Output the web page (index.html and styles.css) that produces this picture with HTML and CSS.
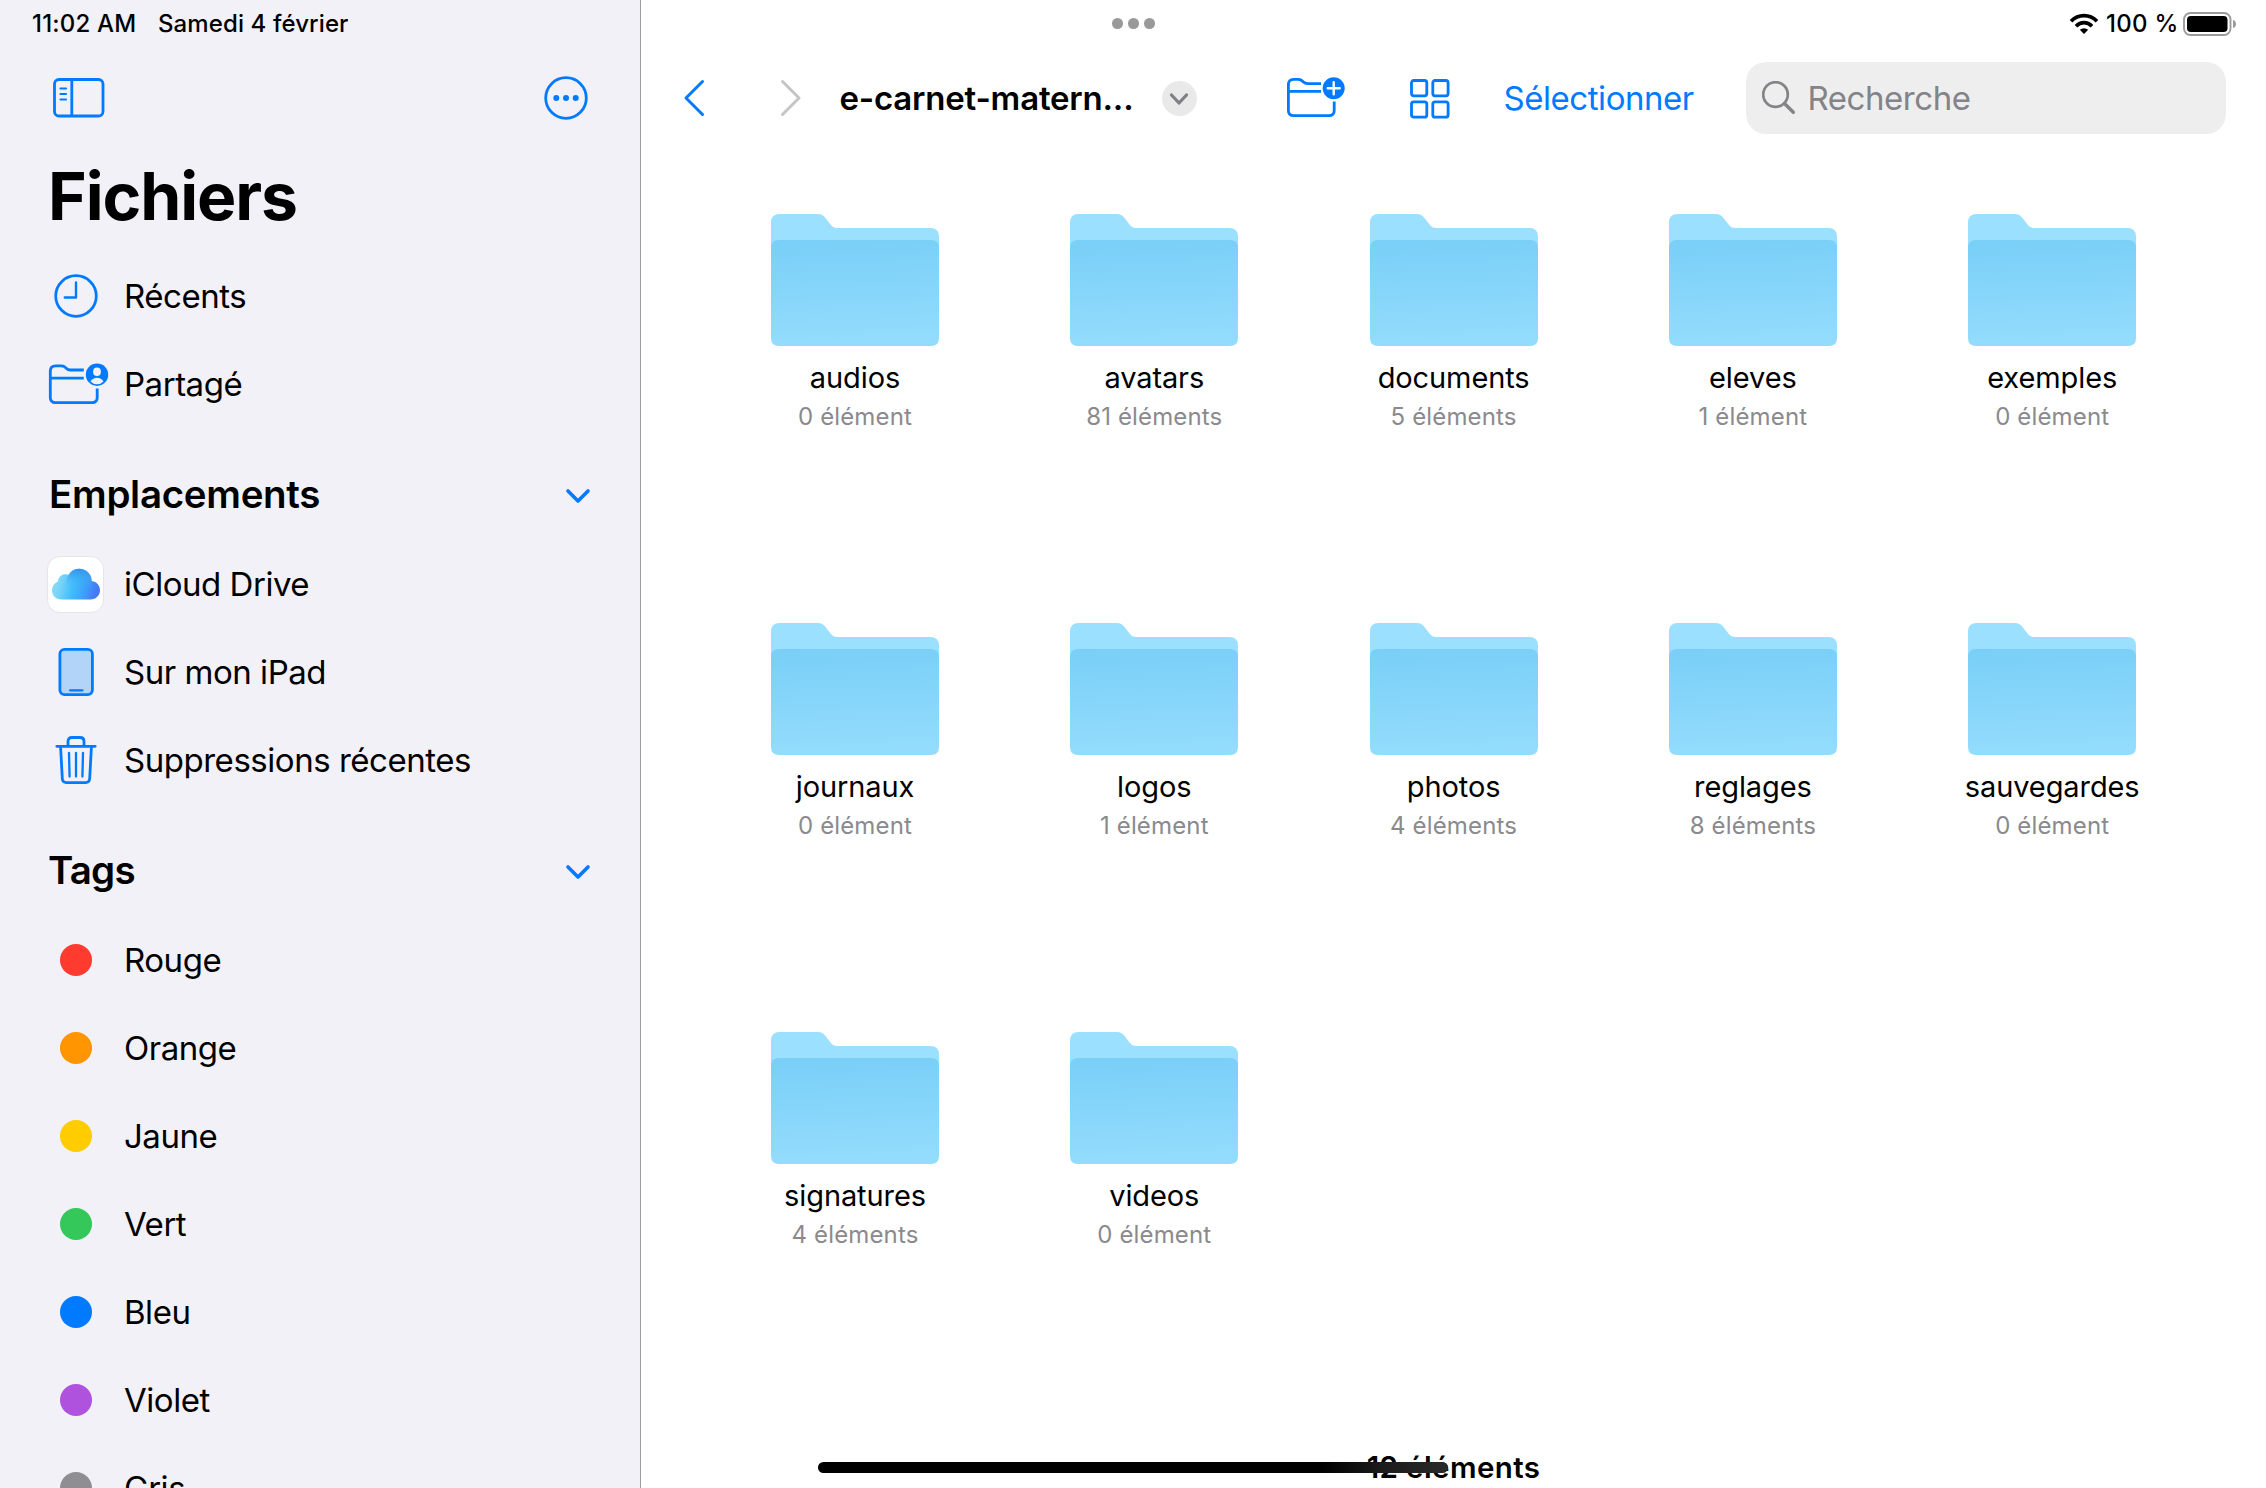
FILE: index.html
```html
<!DOCTYPE html>
<html lang="fr">
<head>
<meta charset="utf-8">
<title>Fichiers</title>
<link rel="stylesheet" href="styles.css">
</head>
<body>
<svg class="defs" width="0" height="0">
  <defs>
    <linearGradient id="front" x1="0" y1="0" x2="0.06" y2="1"><stop offset="0" stop-color="#79cff7"/><stop offset="1" stop-color="#93dcfd"/></linearGradient>
    <linearGradient id="cloud" x1="0" y1="0" x2="1" y2="0.15"><stop offset="0" stop-color="#8edff8"/><stop offset="0.25" stop-color="#79d3f8"/><stop offset="0.52" stop-color="#3fbdfc"/><stop offset="0.75" stop-color="#3da3f8"/><stop offset="1" stop-color="#4579f8"/></linearGradient>
    <linearGradient id="cloudtop" x1="0" y1="0" x2="0" y2="1"><stop offset="0" stop-color="#3591ea"/><stop offset="1" stop-color="#3eb9fa" stop-opacity="0"/></linearGradient>
    <symbol id="folder" viewBox="0 0 168 132">
      <path fill="#9be1ff" d="M0 40V8.500Q0 0 8.500 0H47Q51.500 0 54.500 4L59.500 10.500Q62 14 66.500 14H159.500Q168 14 168 22.500V40Z"/>
      <path fill="url(#front)" d="M0 34Q0 26 8 26H160Q168 26 168 34V124Q168 132 160 132H8Q0 132 0 124Z"/>
    </symbol>
  </defs>
</svg>
<div class="screen">
  <aside class="sidebar">
    <div class="status status-left"><span class="time">11:02 AM</span><span class="date">Samedi 4 février</span></div>
    <div class="side-tools">
      <svg width="52" height="42" viewBox="0 0 52 42" class="line"><rect x="1.500" y="2.500" width="48.500" height="36.500" rx="4.500"/><path d="M18.800 2.500V39"/><path d="M7.500 11.500H13M7.500 17H13M7.500 22.500H13" stroke-width="2.200" stroke-linecap="round"/></svg>
      <svg width="44" height="44" viewBox="0 0 44 44" class="line"><circle cx="22" cy="22" r="20.300"/><g class="solid"><circle cx="12.300" cy="22" r="3"/><circle cx="22" cy="22" r="3"/><circle cx="31.700" cy="22" r="3"/></g></svg>
    </div>
    <h1 class="side-title">Fichiers</h1>
    <nav>
      <a class="row"><span class="icon"><svg width="44" height="44" viewBox="0 0 44 44" class="line"><circle cx="22" cy="22" r="20.300"/><path d="M22 8.500V23.500H10.800" stroke-width="2.400" stroke-linecap="round" stroke-linejoin="round"/></svg></span><span>Récents</span></a>
      <a class="row"><span class="icon"><svg width="60" height="44" viewBox="0 0 60 44" class="line"><path d="M37.800 8H24.500Q22 8 20.500 6.500L18.500 4.800Q17.300 3.800 15 3.800H9.500Q4.300 3.800 4.300 9V35.500Q4.300 40.700 9.500 40.700H46Q51.200 40.700 51.200 35.500V26.500M4.300 16.200H37.800"/><circle class="solid" cx="51" cy="12.700" r="11.200"/><g class="knock"><ellipse cx="51" cy="9.700" rx="3.900" ry="4.300"/><path d="M44.500 19.500Q47 15.800 51 15.800T57.500 19.500Q55 22.200 51 22.200T44.500 19.500Z"/></g></svg></span><span>Partagé</span></a>
    </nav>
    <div class="section"><h2 class="places">Emplacements</h2><svg width="28" height="20" viewBox="0 0 28 20" class="chev"><path d="M4 5L14 15L24 5"/></svg></div>
    <nav>
      <a class="row"><span class="icon"><span class="tile"><svg width="48" height="32" viewBox="0 0 48 32"><path fill="url(#cloud)" d="M9.500 31.500C4 31.500 0 27.500 0 22.500C0 18.500 2.400 15 6 13.500C6.300 9 9.500 6.300 13.500 6.300C14.800 6.300 15.600 6.500 16.600 7C19 2.800 22.700 .8 27 .8C34 .8 39.500 6 39.800 13C44.800 13.800 48 17.500 48 22.300C48 27.600 43.800 31.500 38.500 31.500Z"/><path fill="url(#cloudtop)" d="M14.500 15C14.500 6.500 20 .8 27 .8C34 .8 39.500 6 39.800 13V19H16Z"/></svg></span></span><span>iCloud Drive</span></a>
      <a class="row"><span class="icon"><svg width="38" height="50" viewBox="0 0 38 50" class="line"><rect x="2.900" y="2.400" width="32.500" height="45.200" rx="4.500" fill="#b3d4f9"/><path d="M13 43.300H25.500" stroke-width="2.200" stroke-linecap="round"/></svg></span><span>Sur mon iPad</span></a>
      <a class="row"><span class="icon"><svg width="44" height="50" viewBox="0 0 44 50" class="line" stroke-linecap="round"><path d="M2.800 11.300H41.200M14 11V6.500Q14 2.500 18 2.500H26Q30 2.500 30 6.500V11M6.600 12L8.300 43.500Q8.500 47.600 12.500 47.600H31.500Q35.500 47.600 35.700 43.500L37.400 12"/><path d="M15 18L15.600 41.500M22 18V41.500M29 18L28.400 41.500" stroke-width="2.300"/></svg></span><span>Suppressions récentes</span></a>
    </nav>
    <div class="section"><h2>Tags</h2><svg width="28" height="20" viewBox="0 0 28 20" class="chev"><path d="M4 5L14 15L24 5"/></svg></div>
    <nav>
      <a class="row"><span class="icon"><i class="dot red"></i></span><span>Rouge</span></a>
      <a class="row"><span class="icon"><i class="dot orange"></i></span><span>Orange</span></a>
      <a class="row"><span class="icon"><i class="dot yellow"></i></span><span>Jaune</span></a>
      <a class="row"><span class="icon"><i class="dot green"></i></span><span>Vert</span></a>
      <a class="row"><span class="icon"><i class="dot blue"></i></span><span>Bleu</span></a>
      <a class="row"><span class="icon"><i class="dot purple"></i></span><span>Violet</span></a>
      <a class="row"><span class="icon"><i class="dot gray"></i></span><span>Gris</span></a>
    </nav>
  </aside>
  <main class="main">
    <div class="status status-right">
      <div class="multitask"><i></i><i></i><i></i></div>
      <svg class="wifi" width="30" height="22" viewBox="0 0 30 22"><g fill="none" stroke="#000" stroke-width="3.700"><path d="M2 8.200Q7.500 2.600 15 2.600T28 8.200"/><path d="M7 13.200Q10.500 9.700 15 9.700T23 13.200"/></g><path d="M10.800 16.800Q15 13.600 19.200 16.800L15 21Z"/></svg>
      <span class="percent">100 %</span>
      <svg class="battery" width="54" height="26" viewBox="0 0 54 26"><rect x="1" y="2" width="46.500" height="22" rx="6.500" fill="none" stroke="#9b9b9b" stroke-width="1.900"/><rect x="4" y="5" width="40.500" height="16" rx="3.800"/><path fill="#9b9b9b" d="M50 8.700Q53 10 53 13T50 17.300Z"/></svg>
    </div>
    <header class="toolbar">
      <svg class="back" width="24" height="40" viewBox="0 0 24 40"><path d="M20.500 3.500L4 20L20.500 36.500"/></svg>
      <svg class="forward" width="24" height="40" viewBox="0 0 24 40"><path d="M3.500 3.500L20 20L3.500 36.500"/></svg>
      <h2 class="path">e-carnet-matern...</h2>
      <span class="drop"><svg width="22" height="16" viewBox="0 0 22 16"><path d="M3.500 4L11 12L18.500 4"/></svg></span>
      <svg class="newfolder line" width="60" height="44" viewBox="0 0 60 44"><path d="M36 7.600H22.500Q20 7.600 18.500 6.100L16.500 4.400Q15.300 3.400 13 3.400H8.600Q3.400 3.400 3.400 8.600V34.500Q3.400 39.700 8.600 39.700H44Q49.200 39.700 49.200 34.500V25.500M3.400 15.400H36"/><circle class="solid" cx="48.700" cy="12.300" r="11"/><path d="M42.700 12.300H54.700M48.700 6.300V18.300" stroke="#fff" stroke-width="2.400" stroke-linecap="round"/></svg>
      <svg class="gridicon line" width="40" height="40" viewBox="0 0 40 40"><rect x="1.500" y="1.500" width="15.300" height="15.300" rx="2.200"/><rect x="22.800" y="1.500" width="15.300" height="15.300" rx="2.200"/><rect x="1.500" y="22.800" width="15.300" height="15.300" rx="2.200"/><rect x="22.800" y="22.800" width="15.300" height="15.300" rx="2.200"/></svg>
      <a class="select">Sélectionner</a>
      <div class="search"><svg width="34" height="34" viewBox="0 0 34 34"><circle cx="13.500" cy="13.500" r="12.300"/><path d="M22.500 22.500L31.300 31.300" stroke-width="3.400"/></svg><span>Recherche</span></div>
    </header>
    <section class="files">
      <figure><svg class="folder"><use href="#folder"/></svg><figcaption>audios</figcaption><small>0 élément</small></figure>
      <figure><svg class="folder"><use href="#folder"/></svg><figcaption>avatars</figcaption><small>81 éléments</small></figure>
      <figure><svg class="folder"><use href="#folder"/></svg><figcaption>documents</figcaption><small>5 éléments</small></figure>
      <figure><svg class="folder"><use href="#folder"/></svg><figcaption>eleves</figcaption><small>1 élément</small></figure>
      <figure><svg class="folder"><use href="#folder"/></svg><figcaption>exemples</figcaption><small>0 élément</small></figure>
      <figure><svg class="folder"><use href="#folder"/></svg><figcaption>journaux</figcaption><small>0 élément</small></figure>
      <figure><svg class="folder"><use href="#folder"/></svg><figcaption>logos</figcaption><small>1 élément</small></figure>
      <figure><svg class="folder"><use href="#folder"/></svg><figcaption>photos</figcaption><small>4 éléments</small></figure>
      <figure><svg class="folder"><use href="#folder"/></svg><figcaption>reglages</figcaption><small>8 éléments</small></figure>
      <figure><svg class="folder"><use href="#folder"/></svg><figcaption>sauvegardes</figcaption><small>0 élément</small></figure>
      <figure><svg class="folder"><use href="#folder"/></svg><figcaption>signatures</figcaption><small>4 éléments</small></figure>
      <figure><svg class="folder"><use href="#folder"/></svg><figcaption>videos</figcaption><small>0 élément</small></figure>
    </section>
    <footer class="summary">12 éléments</footer>
  </main>
  <div class="home"></div>
</div>
</body>
</html>
```
FILE: styles.css
```css
* { box-sizing: border-box; }
body { margin: 0; font-family: Inter, "Liberation Sans", sans-serif; color: #000; background: #fff; }
h1, h2, figure { margin: 0; }
svg { display: block; flex: none; }
.defs { position: absolute; }
.screen { position: relative; display: flex; width: 2266px; height: 1488px; overflow: hidden; }

.line { fill: none; stroke: #007aff; stroke-width: 2.8; overflow: visible; }
.solid { fill: #007aff; stroke: none; }
.knock { fill: #f2f1f7; stroke: none; }

.status { display: flex; align-items: center; height: 47px; margin-bottom: 1px; font-size: 24px; font-weight: 500; white-space: nowrap; }
.status-left { padding-left: 32px; }
.time { width: 126px; letter-spacing: 0.2px; }
.date { letter-spacing: 0.1px; }

.sidebar { flex: none; width: 641px; height: 1488px; overflow: hidden; background: #f2f1f7; border-right: 1px solid #9c9c9e; }
.side-tools { display: flex; align-items: center; justify-content: space-between; height: 100px; padding: 0 52px 0 53px; }
.side-title { height: 96px; margin-bottom: 8px; padding-left: 48px; font-size: 66px; line-height: 96px; font-weight: 700; letter-spacing: -1.1px; }
.row { display: flex; align-items: center; gap: 18px; height: 88px; padding-left: 46px; font-size: 33px; white-space: nowrap; letter-spacing: -0.47px; }
.icon { display: flex; align-items: center; justify-content: center; flex: none; width: 60px; padding-right: 1px; }
.section { display: flex; align-items: center; justify-content: space-between; height: 112px; padding: 20px 48px 0 48px; }
.section h2 { font-size: 38.5px; font-weight: 600; letter-spacing: -0.8px; }
.section .places { padding-left: 1px; letter-spacing: -0.3px; }
.chev { margin-top: 3px; fill: none; stroke: #007aff; stroke-width: 3.6; stroke-linecap: round; stroke-linejoin: round; }
.tile { display: flex; align-items: center; justify-content: center; flex: none; width: 57px; height: 57px; border: 1px solid #e6e5e9; border-radius: 13px; background: #fff; }
.dot { width: 32px; height: 32px; border-radius: 50%; }
.red { background: #ff3b30; }
.orange { background: #ff9500; }
.yellow { background: #ffcc00; }
.green { background: #34c759; }
.blue { background: #007aff; }
.purple { background: #af52de; }
.gray { background: #8e8e93; }

.main { flex: 1; min-width: 0; height: 1488px; overflow: hidden; }
.status-right { padding-left: 471px; }
.multitask { display: flex; gap: 5.5px; width: 957px; }
.multitask i { width: 10.5px; height: 10.5px; border-radius: 50%; background: #999; }
.percent { width: 75px; margin-left: 7px; letter-spacing: 0.3px; }
.battery { margin-left: 2px; }

.toolbar { display: flex; align-items: center; height: 100px; white-space: nowrap; font-size: 33px; }
.back, .forward { fill: none; stroke: #007aff; stroke-width: 3; stroke-linecap: round; stroke-linejoin: round; }
.back { margin-left: 41px; }
.forward { margin-left: 73px; stroke: #c5c5c7; }
.path { width: 300px; margin-left: 36.5px; font-size: 33px; font-weight: 600; letter-spacing: -0.2px; }
.drop { display: flex; align-items: center; justify-content: center; flex: none; width: 35px; height: 35px; margin-left: 22px; border-radius: 50%; background: #e9e9ea; }
.drop svg { margin-top: 2px; fill: none; stroke: #7f7f84; stroke-width: 3.2; stroke-linecap: round; stroke-linejoin: round; }
.newfolder { margin-left: 88px; }
.gridicon { margin-left: 65px; margin-top: 1px; }
.select { width: 200px; margin-left: 54px; color: #007aff; letter-spacing: -0.45px; }
.search { display: flex; align-items: center; gap: 11.5px; width: 480px; height: 72px; margin-left: 42.5px; padding-left: 16px; border-radius: 20px; background: #eeeeef; color: #838388; letter-spacing: -0.45px; }
.search svg { fill: none; stroke: #838388; stroke-width: 2.7; stroke-linecap: round; }

.files { display: grid; grid-template-columns: repeat(5, 299.3px); grid-auto-rows: 409px; padding: 66px 0 0 64.35px; }
.files figure { display: flex; flex-direction: column; align-items: center; }
.folder { width: 168px; height: 132px; }
.files figcaption { margin-top: 14px; font-size: 29px; line-height: 36px; letter-spacing: -0.1px; }
.files small { margin-top: 6px; font-size: 24px; line-height: 30px; color: #8a8a8e; letter-spacing: 0.15px; }
.summary { margin-top: 8px; text-align: center; font-size: 29.5px; line-height: 36px; font-weight: 600; letter-spacing: 0.4px; }
.home { position: absolute; left: 818px; top: 1462px; width: 630px; height: 11px; border-radius: 6px; background: linear-gradient(90deg, #000 80%, #1c1c1c 90%, #2a2a2a); }
```
